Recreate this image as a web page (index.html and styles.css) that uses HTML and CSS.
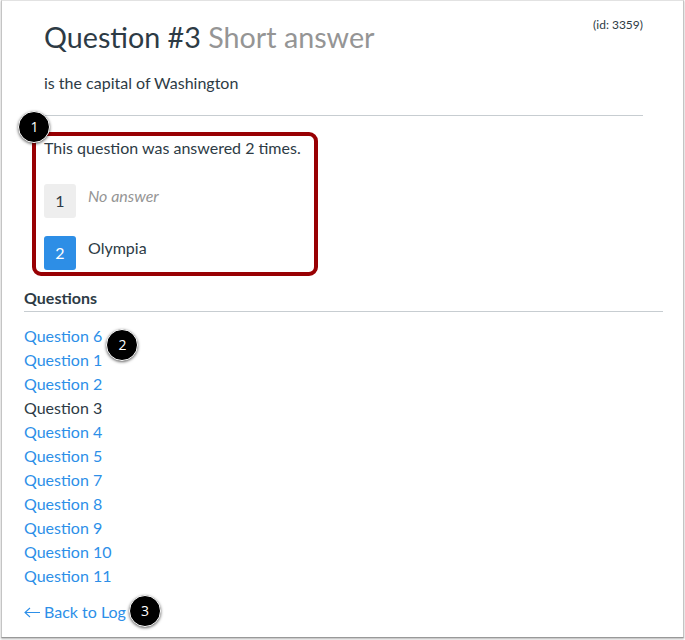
FILE: index.html
```html
<!DOCTYPE html>
<html lang="en">
<head>
<meta charset="utf-8">
<title>Question #3</title>
<link rel="stylesheet" href="styles.css">
</head>
<body>
<main class="page">
  <section class="question">
    <header class="question-header">
      <h1>Question #3 <small>Short answer</small></h1>
      <span class="question-id">(id: 3359)</span>
    </header>
    <p class="question-text">is the capital of Washington</p>
    <div class="answers">
      <p class="summary">This question was answered 2 times.</p>
      <div class="attempt"><span class="attempt-number">1</span><em class="no-answer">No answer</em></div>
      <div class="attempt"><span class="attempt-number current">2</span><span>Olympia</span></div>
      <div class="highlight"></div>
      <span class="badge badge-one">1</span>
    </div>
  </section>
  <nav class="questions">
    <h2>Questions</h2>
    <ul>
      <li><a href="#">Question 6</a></li>
      <li><a href="#">Question 1</a></li>
      <li><a href="#">Question 2</a></li>
      <li>Question 3</li>
      <li><a href="#">Question 4</a></li>
      <li><a href="#">Question 5</a></li>
      <li><a href="#">Question 7</a></li>
      <li><a href="#">Question 8</a></li>
      <li><a href="#">Question 9</a></li>
      <li><a href="#">Question 10</a></li>
      <li><a href="#">Question 11</a></li>
    </ul>
    <span class="badge badge-two">2</span>
  </nav>
  <footer class="back">
    <a href="#"><svg class="arrow" viewBox="0 0 16 12" width="16" height="12"><path d="M16 6.500H1M6 2L1 6.500l5 4.500"/></svg>Back to Log</a>
    <span class="badge badge-three">3</span>
  </footer>
</main>
</body>
</html>
```
FILE: styles.css
```css
* { box-sizing: border-box; }
html, body { margin: 0; height: 100%; }
body { background: #fff; color: #2d3b45; font: 16px/24px Lato, "Liberation Sans", sans-serif; }
a { color: #2d8fe8; text-decoration: none; }
.page { width: 683px; height: 638px; margin-left: 1px; border: 1px solid #c4c4c4; border-top-color: #e2e2e2; border-bottom-color: #999; box-shadow: 0 1px 2px rgba(0,0,0,.3); padding: 0 20px 0 22px; overflow: hidden; }
.question { padding: 0 20px; }
.question-header { display: flex; justify-content: space-between; height: 70px; padding-top: 13px; }
h1 { margin: 0; font-size: 28.7px; font-weight: 400; line-height: 46px; }
h1 small { font-size: 28.7px; color: #959595; }
.question-id { font-size: 12px; line-height: 22px; }
.question-text { margin: 0; height: 45px; border-bottom: 1px solid #c7cdd1; }
.answers { position: relative; height: 168px; padding-top: 20px; }
.summary { margin: 0 0 24px; }
.attempt { display: flex; gap: 12px; height: 34px; margin-bottom: 18px; }
.attempt-number { width: 32px; height: 34px; line-height: 34px; border-radius: 3px; background: #eee; text-align: center; }
.current { background: #2d8ee6; color: #fff; }
.no-answer { color: #959595; }
.highlight { position: absolute; left: -12px; top: 16px; width: 286px; height: 144px; border: 4px solid #980003; border-radius: 9px; }
.badge { position: absolute; width: 32px; height: 32px; border: 1px solid #fff; border-radius: 50%; background: #000; color: #fff; font: 14px/30px "Open Sans", sans-serif; text-align: center; box-shadow: 0 1px 3px rgba(0,0,0,.6); }
.badge-one { left: -26px; top: -5px; padding-left: 1px; }
.questions { position: relative; }
h2 { margin: 0 0 12px; height: 28px; font-size: 16px; line-height: 28px; border-bottom: 1px solid #c7cdd1; }
ul { list-style: none; margin: 0; padding: 0; }
.badge-two { left: 82px; top: 45px; padding-left: 1px; }
.back { position: relative; margin-top: 12px; }
.back a { display: flex; align-items: center; gap: 4px; }
.arrow { fill: none; stroke: currentColor; stroke-width: 1.1; }
.badge-three { left: 105px; top: -5px; }
```
